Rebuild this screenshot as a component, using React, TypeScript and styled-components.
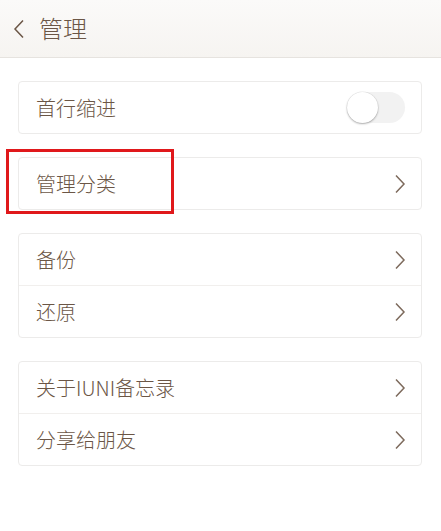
import React from "react";
import styled, { createGlobalStyle } from "styled-components";

const GlobalStyle = createGlobalStyle`
  html, body {
    margin: 0;
    padding: 0;
    background: #ffffff;
  }
  body {
    font-family: "Noto Sans CJK SC", "Noto Sans", sans-serif;
    color: #6b5646;
  }
`;

const Page = styled.div`
  position: relative;
  width: 441px;
  height: 531px;
  background: #ffffff;
  overflow: hidden;
`;

const Header = styled.div`
  height: 58px;
  display: flex;
  align-items: center;
  padding-left: 13px;
  gap: 14px;
  background: linear-gradient(#fbfaf9, #f6f4f1);
  border-bottom: 1px solid #e6e3df;
  box-sizing: border-box;
`;

const Title = styled.div`
  font-size: 24px;
  font-weight: 300;
  color: #6b5646;
  line-height: 1;
  margin-top: -2px;
`;

const Body = styled.div`
  display: flex;
  flex-direction: column;
  gap: 23px;
  padding: 23px 19px 0 18px;
`;

const Card = styled.div`
  border: 1px solid #ecebea;
  border-radius: 4px;
  background: #ffffff;
  display: flex;
  flex-direction: column;
`;

const Row = styled.div`
  height: 51px;
  display: flex;
  align-items: center;
  justify-content: space-between;
  padding: 0 15px 0 17px;
  & + & {
    border-top: 1px solid #f1efed;
  }
`;

const Label = styled.span`
  font-size: 20px;
  font-weight: 300;
  color: #6b5646;
  margin-top: -1px;
`;

const Track = styled.div`
  width: 58px;
  height: 31px;
  border-radius: 16px;
  background: #f2f2f2;
  display: flex;
  align-items: center;
  margin-right: 1px;
`;

const Knob = styled.div`
  width: 31px;
  height: 31px;
  border-radius: 50%;
  background: #ffffff;
  box-shadow: 0 1px 2px rgba(0, 0, 0, 0.3), 0 0 0 0.5px rgba(0, 0, 0, 0.08);
`;

const Highlight = styled.div`
  position: absolute;
  left: 6px;
  top: 149px;
  width: 162px;
  height: 59px;
  border: 3px solid #e0181b;
`;

const Chevron = ({ left = false }: { left?: boolean }) => (
  <svg width="12" height="20" viewBox="0 0 12 20">
    <path
      d={left ? "M10 1.5 L2 10 L10 18.5" : "M2 1.5 L10 10 L2 18.5"}
      fill="none"
      stroke={left ? "#6b5646" : "#7d6a5c"}
      strokeWidth="1.5"
    />
  </svg>
);

const Toggle = () => (
  <Track>
    <Knob />
  </Track>
);

export default function App() {
  return (
    <Page>
      <GlobalStyle />
      <Header>
        <Chevron left />
        <Title>管理</Title>
      </Header>
      <Body>
        <Card>
          <Row>
            <Label>首行缩进</Label>
            <Toggle />
          </Row>
        </Card>
        <Card>
          <Row>
            <Label>管理分类</Label>
            <Chevron />
          </Row>
        </Card>
        <Card>
          <Row>
            <Label>备份</Label>
            <Chevron />
          </Row>
          <Row>
            <Label>还原</Label>
            <Chevron />
          </Row>
        </Card>
        <Card>
          <Row>
            <Label>关于IUNI备忘录</Label>
            <Chevron />
          </Row>
          <Row>
            <Label>分享给朋友</Label>
            <Chevron />
          </Row>
        </Card>
      </Body>
      <Highlight />
    </Page>
  );
}
